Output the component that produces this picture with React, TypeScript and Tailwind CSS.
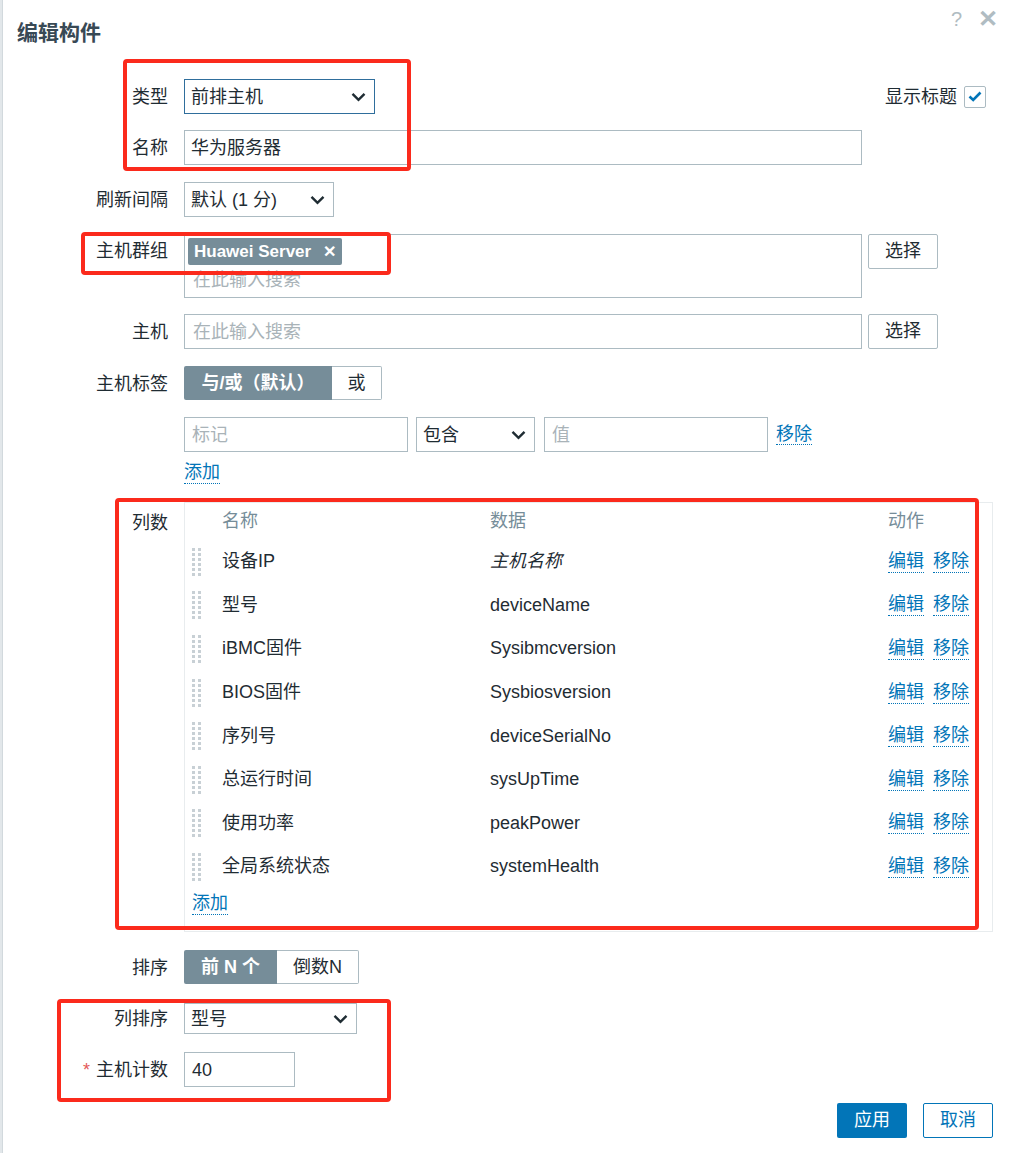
import type { ReactNode } from "react";
import clsx from "clsx";

// 列定义
const columns = [
  { name: "设备IP", data: "主机名称", italic: true },
  { name: "型号", data: "deviceName" },
  { name: "iBMC固件", data: "Sysibmcversion" },
  { name: "BIOS固件", data: "Sysbiosversion" },
  { name: "序列号", data: "deviceSerialNo" },
  { name: "总运行时间", data: "sysUpTime" },
  { name: "使用功率", data: "peakPower" },
  { name: "全局系统状态", data: "systemHealth" },
];

function Chevron() {
  return (
    <svg width="15" height="10" viewBox="0 0 15 10" className="shrink-0">
      <path d="M1.5 1.8 L7.5 7.8 L13.5 1.8" fill="none" stroke="#1f2c33" strokeWidth="2.4" />
    </svg>
  );
}

function Select({ value, className }: { value: string; className: string }) {
  return (
    <div className={clsx("flex items-center justify-between border bg-white pl-[6px] pr-[8px]", className)}>
      <span className="pt-[2px]">{value}</span>
      <Chevron />
    </div>
  );
}

function Link({ children }: { children: ReactNode }) {
  return (
    <span className="text-[#0275b8] border-b border-dotted border-[#0275b8] leading-[21px]">{children}</span>
  );
}

function Row({ label, children, className }: { label: ReactNode; children: ReactNode; className?: string }) {
  return (
    <div className={clsx("flex items-center", className)}>
      <div className="w-[165px] shrink-0 text-right pt-[2px]">{label}</div>
      <div className="ml-4 flex items-center h-full">{children}</div>
    </div>
  );
}

function Handle() {
  return (
    <div className="grid grid-cols-2 gap-x-[3px] gap-y-[2px] w-[9px]">
      {Array.from({ length: 12 }).map((_, i) => (
        <span key={i} className="w-[3px] h-[3px] bg-[#c8d0d5]" />
      ))}
    </div>
  );
}

export default function App() {
  return (
    <div className="relative flex w-full h-[1153px] bg-white text-[#1f2c33] text-[18px] font-['Liberation_Sans','Noto_Sans_CJK_SC',sans-serif]">
      {/* 背景页面露出的一条 */}
      <div className="w-[3px] shrink-0 bg-[#e2e7ea] border-r border-[#d2d9dd]" />

      <div className="relative flex-1 flex flex-col">
        {/* 标题栏 */}
        <div className="flex items-start justify-between">
          <h1 className="ml-[14px] mt-[21px] text-[21px] leading-[24px] font-bold text-[#384955]">编辑构件</h1>
          <div className="flex items-center gap-[16px] mt-[7px] mr-[11px] text-[#b0bcc2]">
            <span className="text-[20px] leading-[24px]">?</span>
            <span className="text-[24px] leading-[24px] font-bold">✕</span>
          </div>
        </div>

        {/* 类型 + 显示标题 */}
        <div className="flex items-center mt-[34px] h-[35px] pr-[23px]">
          <div className="w-[165px] shrink-0 text-right pt-[2px]">类型</div>
          <div className="ml-4 flex-1 flex items-center">
            <Select value="前排主机" className="w-[191px] h-[35px] border-[#2f6e9c]" />
            <div className="flex-1" />
            <span className="pt-[2px]">显示标题</span>
            <span className="ml-[7px] w-[22px] h-[22px] rounded-[2px] border border-[#acbbc2] flex items-center justify-center">
              <svg width="14" height="11" viewBox="0 0 14 11">
                <path d="M1.5 5.5 L5.2 9 L12.5 1.5" fill="none" stroke="#0275b8" strokeWidth="2.6" />
              </svg>
            </span>
          </div>
        </div>

        <Row label="名称" className="mt-[16px] h-[35px]">
          <div className="w-[678px] h-[35px] border border-[#acbbc2] flex items-center px-[6px] pt-[2px]">华为服务器</div>
        </Row>

        <Row label="刷新间隔" className="mt-[17px] h-[35px]">
          <Select value="默认 (1 分)" className="w-[150px] h-[35px] border-[#acbbc2]" />
        </Row>

        <div className="flex items-start mt-[17px] h-[64px]">
          <div className="w-[165px] shrink-0 text-right leading-[35px]">主机群组</div>
          <div className="ml-4 w-[678px] h-[64px] border border-[#acbbc2] px-[3px] pt-[3px]">
            <span className="inline-flex items-center h-[27px] px-[6px] rounded-[2px] bg-[#768d99] text-white font-bold text-[17px]">
              Huawei Server
              <span className="ml-[12px] text-[16px]">✕</span>
            </span>
            <div className="pl-[5px] pt-[2px] text-[#a9b3b8] leading-[26px]">在此输入搜索</div>
          </div>
          <button className="ml-[6px] w-[70px] h-[35px] border border-[#acbbc2] rounded-[2px] bg-white">选择</button>
        </div>

        <Row label="主机" className="mt-[16px] h-[35px]">
          <div className="w-[678px] h-[35px] border border-[#acbbc2] flex items-center px-[8px] pt-[2px] text-[#a9b3b8]">在此输入搜索</div>
          <button className="ml-[6px] w-[70px] h-[35px] border border-[#acbbc2] rounded-[2px] bg-white">选择</button>
        </Row>

        <Row label="主机标签" className="mt-[17px] h-[34px]">
          <div className="flex h-[34px]">
            <span className="w-[148px] flex items-center justify-center bg-[#768d99] text-white rounded-l-[2px] font-semibold">与/或（默认）</span>
            <span className="w-[50px] flex items-center justify-center border border-l-0 border-[#acbbc2] rounded-r-[2px]">或</span>
          </div>
        </Row>

        <Row label="" className="mt-[17px] h-[35px]">
          <div className="w-[224px] h-[35px] border border-[#acbbc2] flex items-center px-[7px] pt-[2px] text-[#a9b3b8]">标记</div>
          <Select value="包含" className="ml-[8px] w-[119px] h-[35px] border-[#acbbc2]" />
          <div className="ml-[9px] w-[224px] h-[35px] border border-[#acbbc2] flex items-center px-[7px] pt-[2px] text-[#a9b3b8]">值</div>
          <span className="ml-[8px]"><Link>移除</Link></span>
        </Row>

        <Row label="" className="mt-[10px] h-[22px]">
          <Link>添加</Link>
        </Row>

        {/* 列数 表格 */}
        <div className="flex items-start mt-[18px]">
          <div className="w-[165px] shrink-0 text-right pt-[8px]">列数</div>
          <div className="ml-4 w-[809px] h-[430px] border border-[#e8ecee] pl-[7px]">
            <div className="grid grid-cols-[30px_268px_398px_1fr] items-center h-[37px] text-[#768d99]">
              <span />
              <span>名称</span>
              <span>数据</span>
              <span>动作</span>
            </div>
            {columns.map((c) => (
              <div key={c.name} className="grid grid-cols-[30px_268px_398px_1fr] items-center h-[43.6px]">
                <Handle />
                <span>{c.name}</span>
                <span className={clsx(c.italic && "italic")}>{c.data}</span>
                <span className="flex gap-[9px]">
                  <Link>编辑</Link>
                  <Link>移除</Link>
                </span>
              </div>
            ))}
            <div className="h-[31px] flex items-center">
              <Link>添加</Link>
            </div>
          </div>
        </div>

        <Row label="排序" className="mt-[18px] h-[34px]">
          <div className="flex h-[34px]">
            <span className="w-[93px] flex items-center justify-center bg-[#768d99] text-white rounded-l-[2px] font-bold">前 N 个</span>
            <span className="w-[82px] flex items-center justify-center border border-l-0 border-[#acbbc2] rounded-r-[2px]">倒数N</span>
          </div>
        </Row>

        <Row label="列排序" className="mt-[19px] h-[31px]">
          <Select value="型号" className="w-[173px] h-[31px] border-[#acbbc2]" />
        </Row>

        <Row
          label={
            <span>
              <span className="text-[#e45959] mr-[6px]">*</span>主机计数
            </span>
          }
          className="mt-[18px] h-[35px]"
        >
          <div className="w-[111px] h-[35px] border border-[#acbbc2] flex items-center px-[7px] pt-[2px]">40</div>
        </Row>

        <div className="flex justify-end gap-[16px] mt-[16px] pr-[16px]">
          <button className="w-[70px] h-[35px] rounded-[2px] bg-[#0275b8] text-white">应用</button>
          <button className="w-[70px] h-[35px] rounded-[2px] border border-[#0275b8] text-[#0275b8] bg-white">取消</button>
        </div>
      </div>

      {/* 红色标注框 */}
      <div className="absolute left-[123px] top-[59px] w-[288px] h-[112px] border-[4px] border-[#fb2a1c] rounded-[4px] pointer-events-none" />
      <div className="absolute left-[81px] top-[232px] w-[310px] h-[43px] border-[4px] border-[#fb2a1c] rounded-[4px] pointer-events-none" />
      <div className="absolute left-[115px] top-[498px] w-[864px] h-[432px] border-[4px] border-[#fb2a1c] rounded-[4px] pointer-events-none" />
      <div className="absolute left-[57px] top-[999px] w-[334px] h-[103px] border-[4px] border-[#fb2a1c] rounded-[4px] pointer-events-none" />
    </div>
  );
}
